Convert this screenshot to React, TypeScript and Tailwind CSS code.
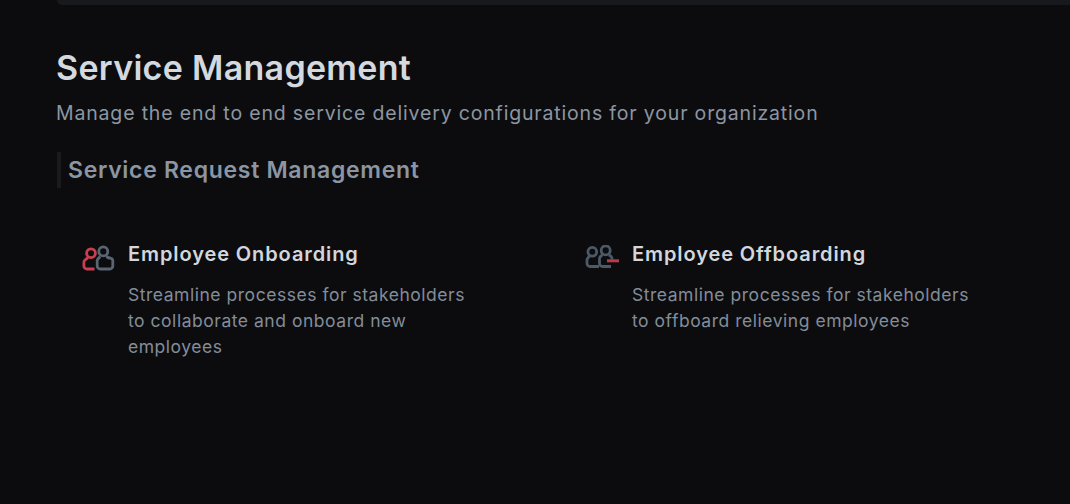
const font = "font-['Inter',sans-serif]"

function OnboardIcon() {
  return (
    <svg width="34" height="27" viewBox="0 0 34 27" fill="none" strokeWidth="2.8">
      <circle cx="10" cy="8.2" r="4.4" stroke="#c8404f" />
      <path d="M7 12.6L3.8 15.2A3 3 0 0 0 2.9 17.4V21A3 3 0 0 0 5.9 24H13.5" stroke="#c8404f" />
      <circle cx="22.3" cy="6.4" r="4.5" stroke="#5a6572" />
      <path d="M19.3 11.6L17.2 13.6A3 3 0 0 0 16.2 15.8V21A3 3 0 0 0 19.2 24H28.8A3 3 0 0 0 31.8 21V15.8A3 3 0 0 0 30.8 13.6L25.3 11.6" stroke="#5a6572" />
      <path d="M25.3 11.6L28.7 13.6" stroke="#5a6572" />
    </svg>
  )
}

function OffboardIcon() {
  return (
    <svg width="36" height="26" viewBox="0 0 36 26" fill="none" strokeWidth="2.8">
      <circle cx="7.3" cy="6.8" r="4.4" stroke="#4c5966" />
      <path d="M4.3 11.2L2.9 13A3 3 0 0 0 2 15.2V18.5A3 3 0 0 0 5 21.5H14" stroke="#4c5966" />
      <circle cx="20.7" cy="5.4" r="4.5" stroke="#4c5966" />
      <path d="M24 9.8L26.2 11.6A3 3 0 0 1 27 13.8V14.5M17.4 9.8L15.4 11.6A3 3 0 0 0 14.5 13.8V18.5A3 3 0 0 0 17.5 21.5H26" stroke="#4c5966" />
      <path d="M22 15.8H34" stroke="#b83c4a" strokeWidth="3" />
    </svg>
  )
}

function Card({ icon, title, text }: { icon: React.ReactNode; title: string; text: string }) {
  return (
    <div className="flex w-[504px]">
      <div className="w-[71px] shrink-0 pl-[24px] pt-[5px]">{icon}</div>
      <div className="w-[350px]">
        <div className="text-[20px] leading-[28px] font-semibold tracking-[0.9px] text-[#d3d7dc]">{title}</div>
        <div className="mt-[14px] text-[17.5px] leading-[26px] tracking-[0.53px] text-[#838d99]">{text}</div>
      </div>
    </div>
  )
}

export default function App() {
  return (
    <div className={`${font} min-h-screen bg-[#0c0c0f] pl-[57px]`}>
      <div className="h-[5px] rounded-bl-[8px] bg-[#17191c]"></div>
      <div className="-ml-px pt-[41px] text-[34px] leading-[44px] font-semibold tracking-[0.3px] text-[#d3d9df]">Service Management</div>
      <div className="-ml-px mt-[9px] text-[19.5px] leading-[28px] tracking-[0.83px] text-[#8c96a2]">
        Manage the end to end service delivery configurations for your organization
      </div>
      <div className="mt-[25px] flex h-[36px] items-center border-l-[4px] border-[#191b1e] pl-[7px] text-[23px] font-semibold tracking-[0.7px] text-[#8b96a3]">
        Service Request Management
      </div>
      <div className="mt-[52px] flex">
        <Card
          icon={<OnboardIcon />}
          title="Employee Onboarding"
          text="Streamline processes for stakeholders to collaborate and onboard new employees"
        />
        <Card
          icon={<OffboardIcon />}
          title="Employee Offboarding"
          text="Streamline processes for stakeholders to offboard relieving employees"
        />
      </div>
    </div>
  )
}
